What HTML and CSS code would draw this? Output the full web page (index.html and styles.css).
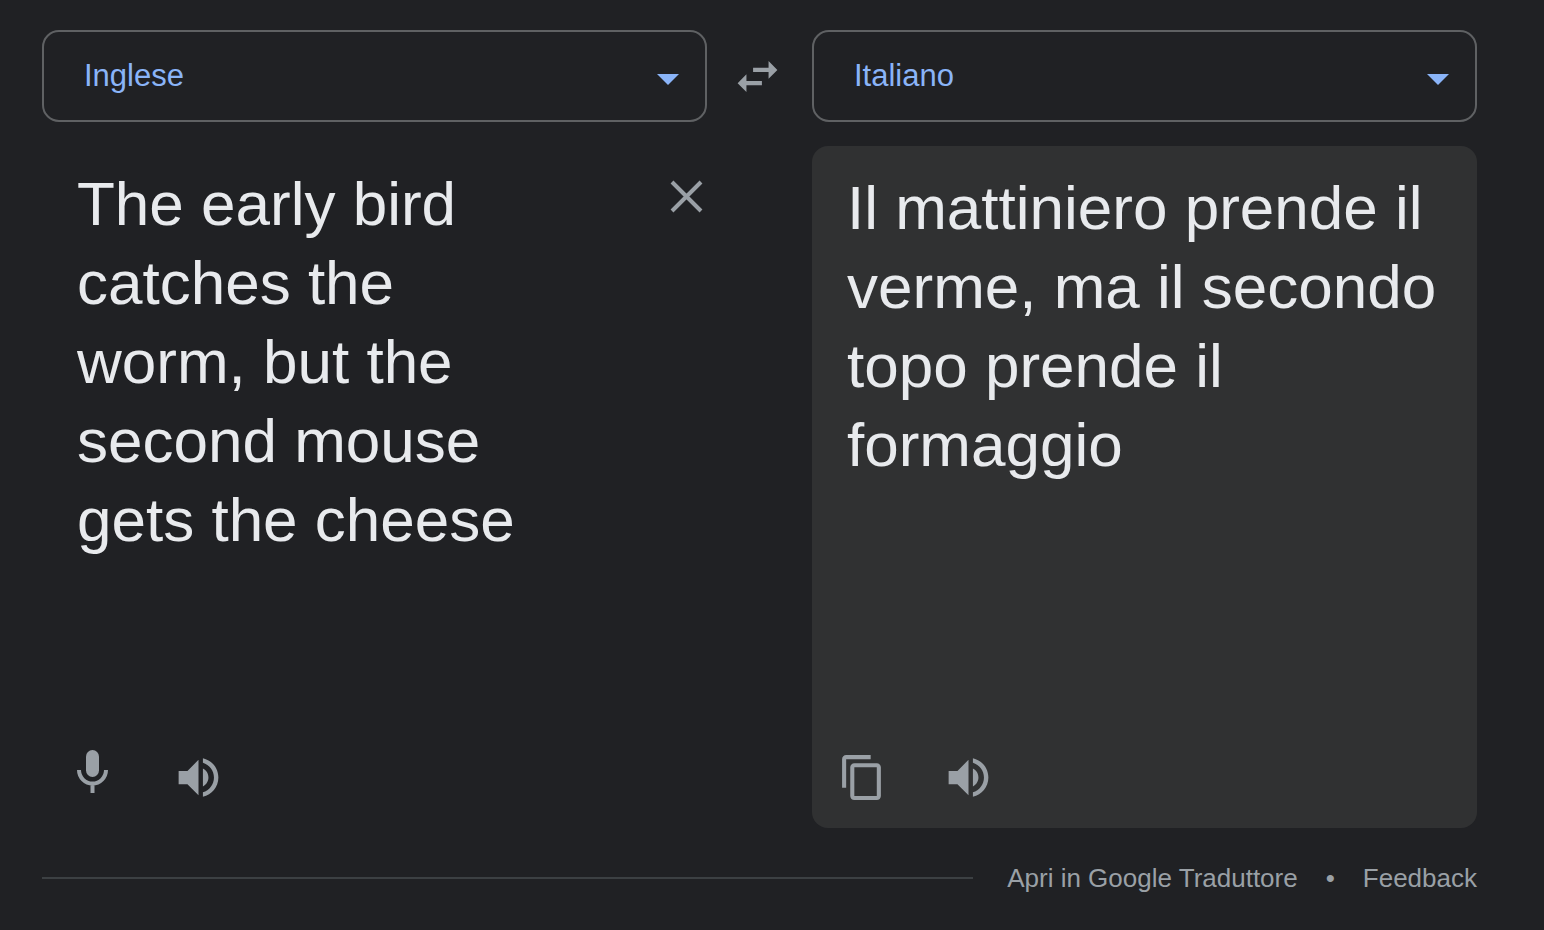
FILE: index.html
```html
<!DOCTYPE html>
<html lang="it">
<head>
    <meta charset="UTF-8">
    <meta name="viewport" content="width=device-width, initial-scale=1.0">
    <title>Traduttore</title>
    <link rel="stylesheet" href="styles.css">
</head>
<body>
    <main class="translator">
        <div class="select-box">
            <select class="lang-select" id="lingua-origine" aria-label="Lingua di origine">
                <option selected>Inglese</option>
                <option>Italiano</option>
            </select>
            <svg class="arrow" viewBox="0 0 22 11" aria-hidden="true"><path d="M0 0h22L11 11z"/></svg>
        </div>

        <button type="button" class="icon-button swap" aria-label="Inverti lingue">
            <svg class="icon" viewBox="0 0 24 24"><path d="M6.99 11L3 15l3.99 4v-3H14v-2H6.99v-3zM21 9l-3.99-4v3H10v2h7.01v3L21 9z"/></svg>
        </button>

        <div class="select-box">
            <select class="lang-select" id="lingua-destinazione" aria-label="Lingua di destinazione">
                <option>Inglese</option>
                <option selected>Italiano</option>
            </select>
            <svg class="arrow" viewBox="0 0 22 11" aria-hidden="true"><path d="M0 0h22L11 11z"/></svg>
        </div>

        <section class="panel source">
            <div class="source-top">
                <textarea class="source-text" id="testo" rows="5" spellcheck="false" aria-label="Testo da tradurre">The early bird catches the worm, but the second mouse gets the cheese</textarea>
                <button type="button" class="icon-button clear" aria-label="Cancella testo">
                    <svg class="icon-clear" viewBox="0 0 40 40"><path d="M5 5l29 29M34 5L5 34"/></svg>
                </button>
            </div>
            <div class="actions">
                <button type="button" class="icon-button" aria-label="Parla">
                    <svg class="icon-mic" viewBox="0 0 56 56">
                        <rect x="22" y="1" width="13" height="27" rx="6.5"/>
                        <path d="M15 21a13.5 13.5 0 0 0 27 0M28.5 34.5V44"/>
                    </svg>
                </button>
                <button type="button" class="icon-button" aria-label="Ascolta originale">
                    <svg class="icon" viewBox="0 0 24 24"><path d="M3 9v6h4l5 5V4L7 9H3zm13.5 3c0-1.77-1.02-3.29-2.5-4.03v8.05c1.48-.73 2.5-2.25 2.5-4.02zM14 3.23v2.06c2.89.86 5 3.54 5 6.71s-2.11 5.85-5 6.71v2.06c4.01-.91 7-4.49 7-8.77s-2.99-7.86-7-8.77z"/></svg>
                </button>
            </div>
        </section>

        <section class="panel target">
            <p class="target-text">Il mattiniero prende il verme, ma il secondo topo prende il formaggio</p>
            <div class="actions">
                <button type="button" class="icon-button" aria-label="Copia">
                    <svg class="icon icon-copy" viewBox="0 0 24 24"><path d="M16 1H4c-1.1 0-2 .9-2 2v14h2V3h12V1zm3 4H8c-1.1 0-2 .9-2 2v14c0 1.1.9 2 2 2h11c1.1 0 2-.9 2-2V7c0-1.1-.9-2-2-2zm0 16H8V7h11v14z"/></svg>
                </button>
                <button type="button" class="icon-button" aria-label="Ascolta traduzione">
                    <svg class="icon" viewBox="0 0 24 24"><path d="M3 9v6h4l5 5V4L7 9H3zm13.5 3c0-1.77-1.02-3.29-2.5-4.03v8.05c1.48-.73 2.5-2.25 2.5-4.02zM14 3.23v2.06c2.89.86 5 3.54 5 6.71s-2.11 5.85-5 6.71v2.06c4.01-.91 7-4.49 7-8.77s-2.99-7.86-7-8.77z"/></svg>
                </button>
            </div>
        </section>
    </main>

    <footer class="footer">
        <hr class="line">
        <a href="#">Apri in Google Traduttore</a>
        <span>•</span>
        <a href="#">Feedback</a>
    </footer>
</body>
</html>
```

FILE: styles.css
```css
* {
    box-sizing: border-box;
}
body {
    display: flex;
    flex-direction: column;
    min-height: 100vh;
    margin: 0;
    padding: 30px 67px 37px 42px;
    font-family: Arial, "Liberation Sans", sans-serif;
    background-color: #202124;
    color: #e8eaed;
}
.translator {
    flex: 1;
    display: grid;
    grid-template-columns: minmax(0, 1fr) auto minmax(0, 1fr);
    grid-template-rows: auto 1fr;
    row-gap: 24px;
}

/* Lingue */
.select-box {
    position: relative;
}
.lang-select {
    display: block;
    width: 100%;
    height: 92px;
    padding: 0 70px 2px 40px;
    appearance: none;
    background: transparent;
    border: 2px solid #5f6163;
    border-radius: 17px;
    color: #8ab4f8;
    font-family: inherit;
    font-size: 31px;
    cursor: pointer;
}
.lang-select option {
    background: #303134;
}
.arrow {
    position: absolute;
    top: 44px;
    right: 28px;
    width: 22px;
    height: 11px;
    fill: #8ab4f8;
    pointer-events: none;
}

/* Pulsanti */
.icon-button {
    display: flex;
    align-items: center;
    justify-content: center;
    width: 56px;
    height: 56px;
    padding: 0;
    background: none;
    border: none;
    color: #9aa0a6;
    cursor: pointer;
}
.icon-button:hover {
    color: #e8eaed;
}
.swap {
    align-self: center;
    margin: 0 27px 0 22px;
}
.icon {
    width: 53px;
    height: 53px;
    fill: currentColor;
}
.icon-copy {
    width: 49px;
    height: 49px;
}
.icon-mic {
    width: 56px;
    height: 56px;
    fill: currentColor;
}
.icon-mic path {
    fill: none;
    stroke: currentColor;
    stroke-width: 4;
}
.clear {
    width: 40px;
    height: 40px;
    margin-top: 13px;
}
.icon-clear {
    width: 40px;
    height: 40px;
    fill: none;
    stroke: currentColor;
    stroke-width: 4;
}

/* Testi */
.panel {
    display: flex;
    flex-direction: column;
    justify-content: space-between;
    border-radius: 16px;
}
.source {
    grid-column: 1;
    padding: 18px 0 23px;
}
.target {
    grid-column: 3;
    padding: 22px 0 23px;
    background: #303132;
}
.source-top {
    display: flex;
    align-items: flex-start;
    padding-left: 35px;
}
.source-text,
.target-text {
    font-family: inherit;
    font-size: 62px;
    line-height: 79px;
    color: #e8eaed;
}
.source-text {
    flex: 1;
    min-width: 0;
    padding: 0 110px 0 0;
    background: transparent;
    border: none;
    outline: none;
    resize: none;
    overflow: hidden;
}
.target-text {
    margin: 0;
    padding: 0 35px;
}
.actions {
    display: flex;
    gap: 50px;
    padding-left: 22px;
}

.footer {
    display: flex;
    align-items: center;
    gap: 28px;
    margin-top: 35px;
    font-size: 26px;
    line-height: 30px;
    color: #9aa0a6;
}
.footer a {
    color: inherit;
    text-decoration: none;
}
.footer a:hover {
    text-decoration: underline;
}
.line {
    flex: 1;
    margin: 0 6px 0 0;
    border: none;
    border-top: 2px solid #3c4043;
}
```
